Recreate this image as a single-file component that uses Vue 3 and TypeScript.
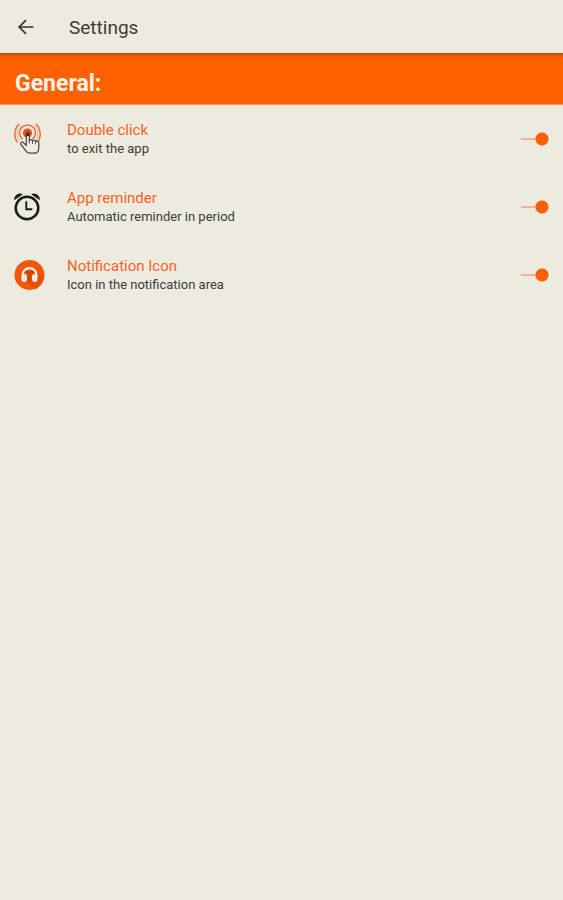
<script setup lang="ts">
import { reactive } from 'vue'

type IconName = 'tap' | 'alarm' | 'headphones'

interface Setting {
  id: string
  icon: IconName
  title: string
  detail: string
  enabled: boolean
}

const settings = reactive<Setting[]>([
  { id: 'double-click', icon: 'tap', title: 'Double click', detail: 'to exit the app', enabled: true },
  { id: 'app-reminder', icon: 'alarm', title: 'App reminder', detail: 'Automatic reminder in period', enabled: true },
  { id: 'notification-icon', icon: 'headphones', title: 'Notification Icon', detail: 'Icon in the notification area', enabled: true },
])
</script>

<template>
  <div class="page">
    <header class="toolbar">
      <button class="back" type="button" aria-label="Back">
        <svg viewBox="0 0 20 20" width="20" height="20" fill="none" stroke="#333" stroke-width="1.7">
          <path d="M17.5 10H3.5M10 3.2L3.2 10l6.8 6.8" />
        </svg>
      </button>
      <h1 class="title">Settings</h1>
    </header>

    <main>
      <h2 class="section">General:</h2>
      <ul class="list">
        <li v-for="item in settings" :key="item.id">
          <label class="row" :for="item.id">
            <svg v-if="item.icon === 'tap'" class="icon" viewBox="0 0 32 32" fill="none">
              <g stroke="#f4693a" stroke-width="1.5">
                <path d="M9.5 16.2a8 8 0 1 1 10 0" />
                <path d="M6 1C1 6 .5 14 4.500 19.500M23 1c5 5 5.500 13 1.500 18.500" />
                <path d="M7.500 3C3.500 7 3.300 13 6 17.500M21.500 3c4 4 4.200 10 1.500 14.500" stroke-width="1" opacity=".45" />
              </g>
              <circle cx="14.5" cy="10" r="4.6" fill="#e84e1b" />
              <path
                d="M13.300 22.500V11.500c0-2.200 3-2.200 3 0v6.200c.4-1.500 3-1.400 3.200 .3 .5-1.200 2.900-.9 3.100 .6 .7-1 3.200-.5 3.200 1.200v4.400c0 3.600-1.600 6-4.400 6h-4.400c-2.800 0-4.600-2.500-6-4.800L7.800 21.300c-.9-1.800 1.500-2.800 2.900-1.400z"
                fill="#efece2"
                stroke="#444"
                stroke-width="1.200"
                stroke-linejoin="round"
              />
              <path d="M16.300 17.500v3M19.500 18v3M22.600 18.800v2.400" stroke="#555" stroke-width="1" />
              <path d="M14.800 9.500v3.500" stroke="#4a2a20" stroke-width="2.600" />
            </svg>
            <svg v-else-if="item.icon === 'alarm'" class="icon" viewBox="0 0 32 32" fill="none" stroke="#1c1c1a">
              <circle cx="14" cy="17" r="11.3" stroke-width="2.500" />
              <path d="M13.300 10.300v8h6" stroke-width="1.900" />
              <path d="M1.200 9.200C.8 4.600 5.500 1 9.900 3.200zM26.800 9.200c.4-4.600-4.300-8.200-8.700-6z" fill="#1c1c1a" stroke="none" />
            </svg>
            <svg v-else class="icon" viewBox="0 0 32 32" fill="none">
              <circle cx="16.5" cy="16" r="15" fill="#f4570a" />
              <path d="M19 8l11.500 10.500a14.500 14.500 0 0 1-9 12L12 22z" fill="#e85004" />
              <path d="M9.800 18v-2.500a6.700 6.300 0 0 1 13.400 0V18" stroke="#fff" stroke-width="2.200" />
              <path d="M12 13.800c2-2 7-2 9 0" stroke="#c8420a" stroke-width="2.200" />
              <path d="M16.500 12.500v10.500" stroke="#cf480c" stroke-width="4" />
              <rect x="8.6" y="15.200" width="5.200" height="7.600" rx="1.800" fill="#fff" />
              <rect x="19.2" y="15.200" width="5.200" height="7.600" rx="1.800" fill="#fff" />
              <path d="M11.200 15.500v6.500M21.800 15.500v6.500" stroke="#f6a47c" stroke-width=".6" />
            </svg>
            <span class="text">
              <span class="name">{{ item.title }}</span>
              <span class="detail">{{ item.detail }}</span>
            </span>
            <input :id="item.id" v-model="item.enabled" class="switch" type="checkbox" role="switch" />
          </label>
        </li>
      </ul>
    </main>
  </div>
</template>

<style>
body {
  background: #edebdf;
}
</style>

<style scoped>
.page {
  min-height: 100vh;
  background: #edebdf;
  color: #3c3c38;
  font-family: Roboto, "Liberation Sans", sans-serif;
}

.toolbar {
  display: flex;
  align-items: center;
  gap: 33px;
  height: 53px;
  padding: 0 16px;
}

.back {
  display: flex;
  padding: 0;
  border: 0;
  background: none;
  cursor: pointer;
}

.title {
  margin: 0;
  padding-top: 2px;
  font-size: 19px;
  font-weight: 400;
  line-height: 24px;
}

.section {
  margin: 0;
  padding: 17px 15px 6px;
  background: linear-gradient(#b8480c, #f35b02 3px, #ff6000 7px);
  color: #fff3ea;
  font-size: 23px;
  font-weight: 700;
  line-height: 28px;
  border-bottom: 1px solid #f99562;
}

.list {
  margin: 0;
  padding: 0;
  list-style: none;
}

.row {
  display: flex;
  align-items: center;
  height: 68px;
  padding: 0 14px 0 13px;
  cursor: pointer;
}

.icon {
  flex: none;
  width: 32px;
  height: 32px;
}

.text {
  display: flex;
  flex: 1;
  flex-direction: column;
  padding-left: 22px;
}

.name {
  color: #fa6025;
  font-size: 15px;
  line-height: 20px;
}

.detail {
  font-size: 13px;
  line-height: 18px;
}

.switch {
  appearance: none;
  flex: none;
  width: 28px;
  height: 16px;
  margin: 0;
  background:
    radial-gradient(circle at 21px 8px, #ff5f00 6px, transparent 7px),
    linear-gradient(#f3b491, #f3b491) 0 7px / 16px 2px no-repeat;
  cursor: pointer;
}

.switch:not(:checked) {
  background:
    radial-gradient(circle at 7px 8px, #a5a39b 6px, transparent 7px),
    linear-gradient(#c9c7bd, #c9c7bd) 12px 7px / 16px 2px no-repeat;
}
</style>
